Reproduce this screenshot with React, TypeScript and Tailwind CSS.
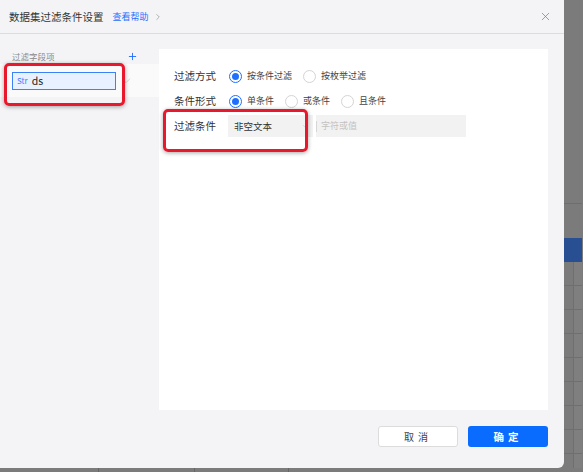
import { X, ChevronRight, ChevronDown, Check, Plus } from 'lucide-react';

function Radio({ checked, label }: { checked?: boolean; label: string }) {
  return (
    <label className="flex items-center gap-[5px]">
      <span
        className={
          checked
            ? 'flex h-[13px] w-[13px] items-center justify-center rounded-full border border-[#1f6fff] bg-white'
            : 'h-[13px] w-[13px] rounded-full border border-[#d4d4d4] bg-white'
        }
      >
        {checked && <span className="h-[7px] w-[7px] rounded-full bg-[#1f6fff]" />}
      </span>
      <span className="text-[9px] text-[#444]">{label}</span>
    </label>
  );
}

function GridStrip() {
  const rows = [0, 1, 2, 3, 4, 5, 6, 7, 8];
  return (
    <div className="flex w-[18px] flex-col overflow-hidden bg-[#7b7b7b]">
      <div className="h-[204px] shrink-0 border-b border-[#6e6e6e]" />
      <div className="h-[34px] shrink-0" />
      <div className="h-[24px] shrink-0 bg-[#274f92]" />
      <div className="flex flex-col">
        {rows.map((r) => (
          <div key={r} className="flex h-[24px] shrink-0 border-b border-[#6f6f6f]">
            <div className="w-[10px] border-r border-[#6f6f6f]" />
            <div className="flex-1 bg-[#7f7f7f]" />
          </div>
        ))}
      </div>
    </div>
  );
}

export default function App() {
  return (
    <div className="flex h-[472px] w-[583px] flex-col overflow-hidden bg-[#7b7b7b] font-['Noto_Sans_CJK_SC','Noto_Sans',sans-serif]">
      <div className="flex h-[468px] shrink-0">
        <div className="flex w-[564px] shrink-0 flex-col rounded-br-[6px] bg-[#f4f4f6]">
          {/* header */}
          <div className="flex h-[34px] shrink-0 items-center border-b border-[#dcdcdf] pl-[9px] pr-[12px]">
            <span className="text-[10.5px] text-[#333]">数据集过滤条件设置</span>
            <span className="ml-[9px] text-[9px] text-[#1f6fff]">查看帮助</span>
            <ChevronRight className="ml-[4px] h-[10px] w-[10px] text-[#888]" strokeWidth={1.5} />
            <X className="ml-auto h-[13px] w-[13px] text-[#777]" strokeWidth={1.3} />
          </div>

          {/* body */}
          <div className="flex flex-1 pt-[15px]">
            {/* left */}
            <div className="w-[159px] shrink-0">
              <div className="flex h-[15px] items-center justify-between pl-[12px] pr-[21px]">
                <span className="text-[8.5px] text-[#8a8a8a]">过滤字段项</span>
                <Plus className="h-[11px] w-[11px] text-[#1f6fff]" strokeWidth={2} />
              </div>
              <div className="relative">
                <div className="flex h-[33px] items-center bg-[#fafafa] pl-[12px] pr-[28px]">
                  <div className="flex h-[18px] w-[104px] items-center gap-[4px] border border-[#3b82f6] bg-[#e8f1ff] px-[4px]">
                    <span className="text-[8px] text-[#3b7bff]">Str</span>
                    <span className="text-[10.5px] text-[#222]">ds</span>
                  </div>
                  <Check className="ml-auto h-[8px] w-[8px] text-[#aaa]" strokeWidth={1.5} />
                </div>
                <div className="absolute left-[4px] top-[-1px] h-[43px] w-[121px] rounded-[5px] border-[3px] border-[#e8192c] shadow-[0_1px_4px_rgba(0,0,0,0.35)]" />
              </div>
            </div>

            {/* right panel */}
            <div className="flex flex-col">
              <div className="h-[361px] w-[389px] bg-white pl-[15px] pt-[19px]">
                <div className="flex h-[16px] items-center">
                  <span className="w-[55px] text-[10.5px] text-[#333]">过滤方式</span>
                  <div className="flex gap-[11px]">
                    <Radio checked label="按条件过滤" />
                    <Radio label="按枚举过滤" />
                  </div>
                </div>
                <div className="mt-[9px] flex h-[16px] items-center">
                  <span className="w-[55px] text-[10.5px] text-[#333]">条件形式</span>
                  <div className="flex gap-[11px]">
                    <Radio checked label="单条件" />
                    <Radio label="或条件" />
                    <Radio label="且条件" />
                  </div>
                </div>
                <div className="relative mt-[6px] flex h-[22px] items-center">
                  <span className="w-[54px] text-[10.5px] text-[#333]">过滤条件</span>
                  <div className="flex h-[22px] w-[85px] items-center bg-[#f2f2f2] pl-[6px] pr-[3px]">
                    <span className="text-[9.5px] text-[#333]">非空文本</span>
                    <ChevronDown className="ml-auto h-[9px] w-[9px] text-[#c5c5c5]" strokeWidth={1.5} />
                  </div>
                  <div className="ml-[3px] flex h-[22px] w-[150px] items-center bg-[#f2f2f2]">
                    <span className="h-[11px] border-l border-[#d6d6d6]" />
                    <span className="ml-[4px] text-[9px] text-[#c2c2c2]">字符或值</span>
                  </div>
                  <div className="absolute left-[-11px] top-[-6px] h-[43px] w-[145px] rounded-[5px] border-[3px] border-[#e8192c] shadow-[0_1px_4px_rgba(0,0,0,0.35)]" />
                </div>
              </div>

              {/* footer */}
              <div className="mt-[16px] flex justify-end gap-[10px]">
                <button className="flex h-[21px] w-[80px] items-center justify-center rounded-[3px] border border-[#dcdcdc] bg-white text-[10px] tracking-[4px] text-[#444]">
                  取消
                </button>
                <button className="flex h-[21px] w-[80px] items-center justify-center rounded-[3px] bg-[#0a6cff] text-[10.5px] font-bold tracking-[4px] text-white">
                  确定
                </button>
              </div>
            </div>
          </div>
        </div>
        <GridStrip />
      </div>
      <div className="flex h-[4px] bg-[#7b7b7b]">
        <div className="w-[99px] border-r border-[#666]" />
        <div className="w-[96px] border-r border-[#666]" />
        <div className="w-[94px] border-r border-[#666]" />
      </div>
    </div>
  );
}
